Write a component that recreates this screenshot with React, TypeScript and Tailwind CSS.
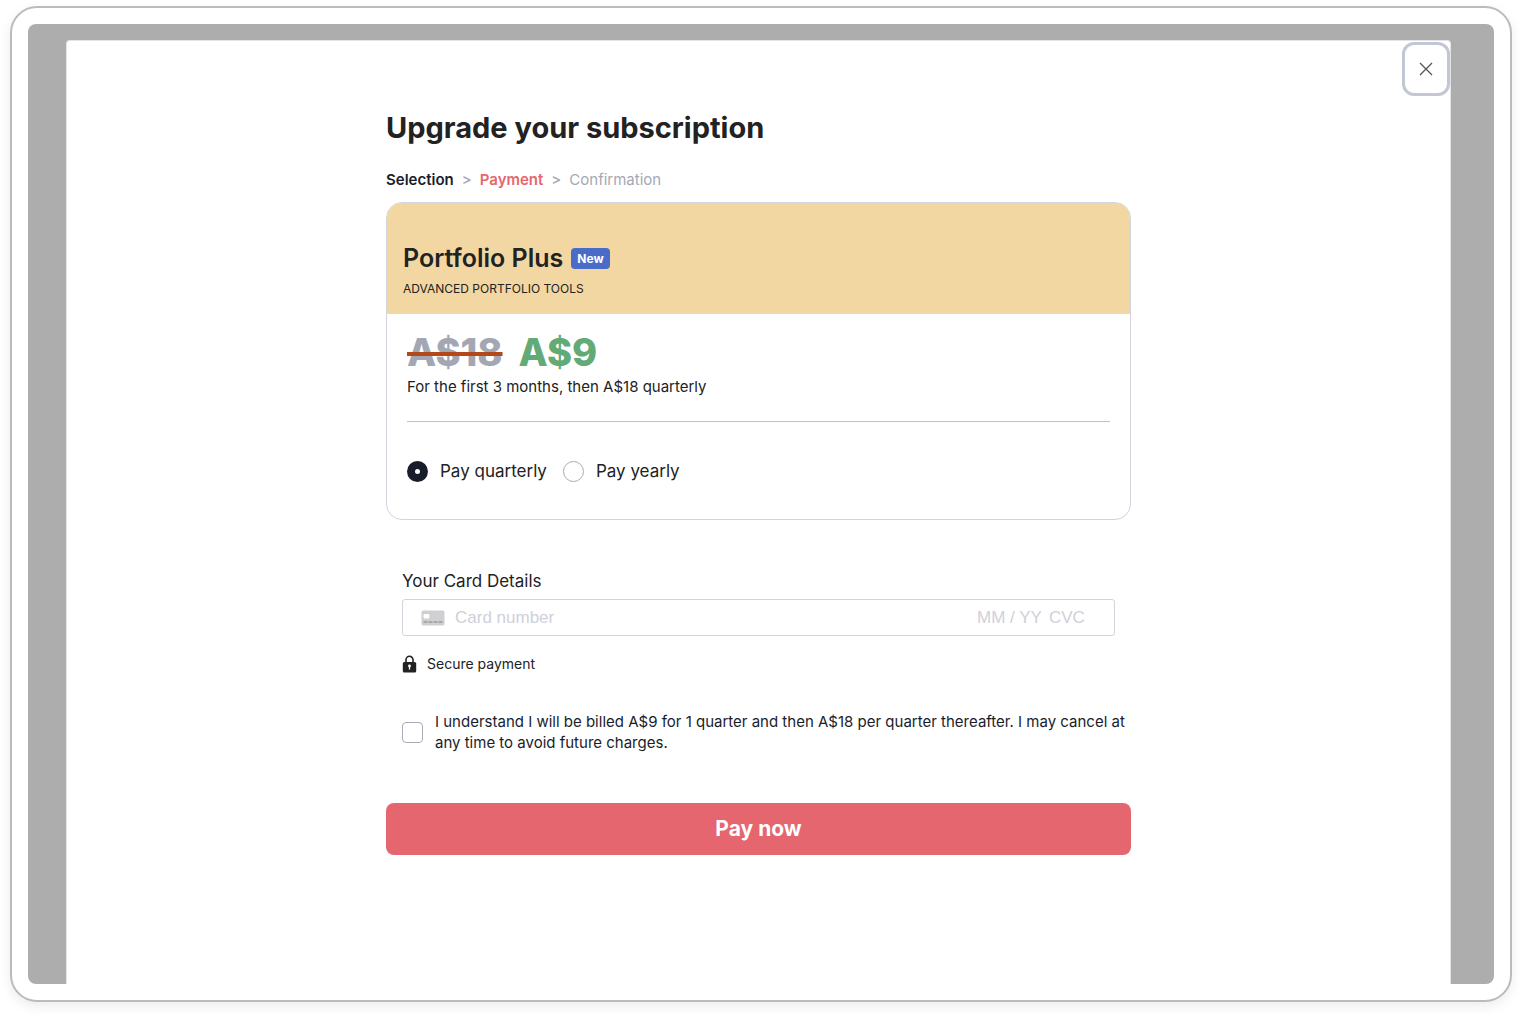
import { useState } from "react";
import type { ReactNode } from "react";

type Period = "quarterly" | "yearly";

export default function App() {
  return (
    <div className="flex min-h-screen bg-white pt-1.5 pr-[11px] pb-3.5 pl-2.5 font-[Inter,'Liberation_Sans',sans-serif] text-[#222]">
      <div className="flex flex-1 rounded-[27px] border-2 border-[#bbb] bg-white p-4 shadow-[0_4px_12px_rgba(0,0,0,0.08)]">
        <div className="flex flex-1 overflow-hidden rounded-lg bg-[#adadad] pt-4 pr-[43px] pl-[38px]">
          <UpgradeDialog />
        </div>
      </div>
    </div>
  );
}

function UpgradeDialog() {
  return (
    <div role="dialog" aria-labelledby="title" className="relative flex-1 rounded-t-sm border border-b-0 border-[#e3e4e8] bg-white pt-[65px]">
      <button
        type="button"
        aria-label="Close"
        className="absolute top-px right-0 flex h-[54px] w-12 items-center justify-center rounded-xl border-[3px] border-[#c3c7d4] bg-white"
      >
        <CloseIcon />
      </button>

      <form className="mx-auto max-w-[745px]" onSubmit={(e) => e.preventDefault()}>
        <h1 id="title" className="text-[29px] leading-11 font-bold">
          Upgrade your subscription
        </h1>
        <Steps />
        <PlanCard />
        <CardDetails />
        <button
          type="submit"
          className="mt-[50px] h-[52px] w-full rounded-lg bg-[#e5666e] text-[21px] font-bold text-white"
        >
          Pay now
        </button>
      </form>
    </div>
  );
}

function Steps() {
  return (
    <ol className="mt-5 flex gap-2 text-[15px] leading-5 text-[#a5a8b5]">
      <li className="font-semibold text-[#191d2b]">Selection</li>
      <li aria-hidden="true" className="font-medium">&gt;</li>
      <li className="font-semibold text-[#e5666e]">Payment</li>
      <li aria-hidden="true" className="font-medium">&gt;</li>
      <li>Confirmation</li>
    </ol>
  );
}

function PlanCard() {
  const [period, setPeriod] = useState<Period>("quarterly");

  return (
    <section className="mt-3 overflow-hidden rounded-2xl border border-[#d2d4de]">
      <div className="bg-[#f2d7a2] px-4 pt-[39px] pb-[15px]">
        <div className="flex items-center gap-2">
          <h2 className="text-[25px] leading-8 font-semibold">Portfolio Plus</h2>
          <span className="rounded bg-[#496cc8] px-1.5 text-xs leading-[21px] font-bold text-white">New</span>
        </div>
        <p className="mt-[5px] text-xs leading-5 uppercase">Advanced portfolio tools</p>
      </div>

      <div className="px-5 pt-4 pb-[34px]">
        <div className="flex gap-4 text-[38px] leading-11 font-extrabold">
          <s className="text-[#a3a7b4] decoration-[#b3481a] decoration-4">A$18</s>
          <span className="text-[#62ab77]">A$9</span>
        </div>
        <p className="mt-[3px] text-[15px] leading-5">For the first 3 months, then A$18 quarterly</p>
        <hr className="mt-6 border-[#bfc1cc]" />
        <fieldset className="mt-[35px] flex gap-4">
          <PeriodOption checked={period === "quarterly"} onSelect={() => setPeriod("quarterly")}>
            Pay quarterly
          </PeriodOption>
          <PeriodOption checked={period === "yearly"} onSelect={() => setPeriod("yearly")}>
            Pay yearly
          </PeriodOption>
        </fieldset>
      </div>
    </section>
  );
}

function PeriodOption({ checked, onSelect, children }: { checked: boolean; onSelect: () => void; children: ReactNode }) {
  return (
    <label className="flex items-center gap-3 text-[17px] leading-7">
      <input
        type="radio"
        name="period"
        checked={checked}
        onChange={onSelect}
        className="size-[21px] appearance-none rounded-full border border-[#a9acb8] bg-white checked:border-8 checked:border-[#191d2b]"
      />
      {children}
    </label>
  );
}

function CardDetails() {
  const input = "bg-transparent outline-none placeholder:text-[#cfd0da]";

  return (
    <section className="mt-[49px] px-4">
      <label htmlFor="card-number" className="block text-[17px] leading-6">
        Your Card Details
      </label>
      <div className="mt-1.5 flex h-[37px] items-center rounded-[3px] border border-[#d2d4de] pr-[29px] pl-[18px] font-['Liberation_Sans',sans-serif] text-[17px]">
        <CardIcon />
        <input id="card-number" placeholder="Card number" className={`${input} ml-2.5 min-w-0 flex-1`} />
        <input aria-label="Expiry date" placeholder="MM / YY" className={`${input} w-16`} />
        <input aria-label="CVC" placeholder="CVC" className={`${input} ml-2 w-9`} />
      </div>

      <p className="mt-4 flex items-center gap-2.5 text-sm leading-6">
        <LockIcon />
        Secure payment
      </p>

      {/* the terms run a little past the card field on the right */}
      <label className="-mr-4 mt-[35px] flex items-center gap-3 text-[15px] leading-[21px] text-[#191d2b]">
        <input
          type="checkbox"
          className="size-[21px] shrink-0 appearance-none rounded border border-[#a9acb8] bg-white checked:bg-[#191d2b]"
        />
        <span>
          I understand I will be billed A$9 for 1 quarter and then A$18 per quarter thereafter. I may cancel at any
          time to avoid future charges.
        </span>
      </label>
    </section>
  );
}

function CloseIcon() {
  return (
    <svg viewBox="0 0 14 14" className="size-3.5" fill="none" stroke="#555" strokeWidth="1.3">
      <path d="M1 1l12 12M13 1L1 13" />
    </svg>
  );
}

function CardIcon() {
  return (
    <svg viewBox="0 0 24 16" className="h-4 w-6 shrink-0">
      <rect x="0.5" y="0.5" width="23" height="15" rx="1.5" fill="#d0d0d2" />
      <rect x="2.5" y="4" width="6" height="4.5" rx="1" fill="#fff" />
      <path d="M2.5 12h19" stroke="#a8a8aa" strokeWidth="1.8" strokeDasharray="4 1" />
    </svg>
  );
}

function LockIcon() {
  return (
    <svg viewBox="0 0 15 18" className="h-[18px] w-[15px]">
      <path d="M4 8V4.8a3.5 3.5 0 0 1 7 0V8" fill="none" stroke="#222" strokeWidth="1.6" />
      <rect x="0.8" y="7" width="13.4" height="10.4" rx="1.5" fill="#222" />
      <circle cx="7.5" cy="11" r="1.4" fill="#fff" />
      <path d="M7.5 11v3.6" stroke="#fff" strokeWidth="1.2" />
    </svg>
  );
}
